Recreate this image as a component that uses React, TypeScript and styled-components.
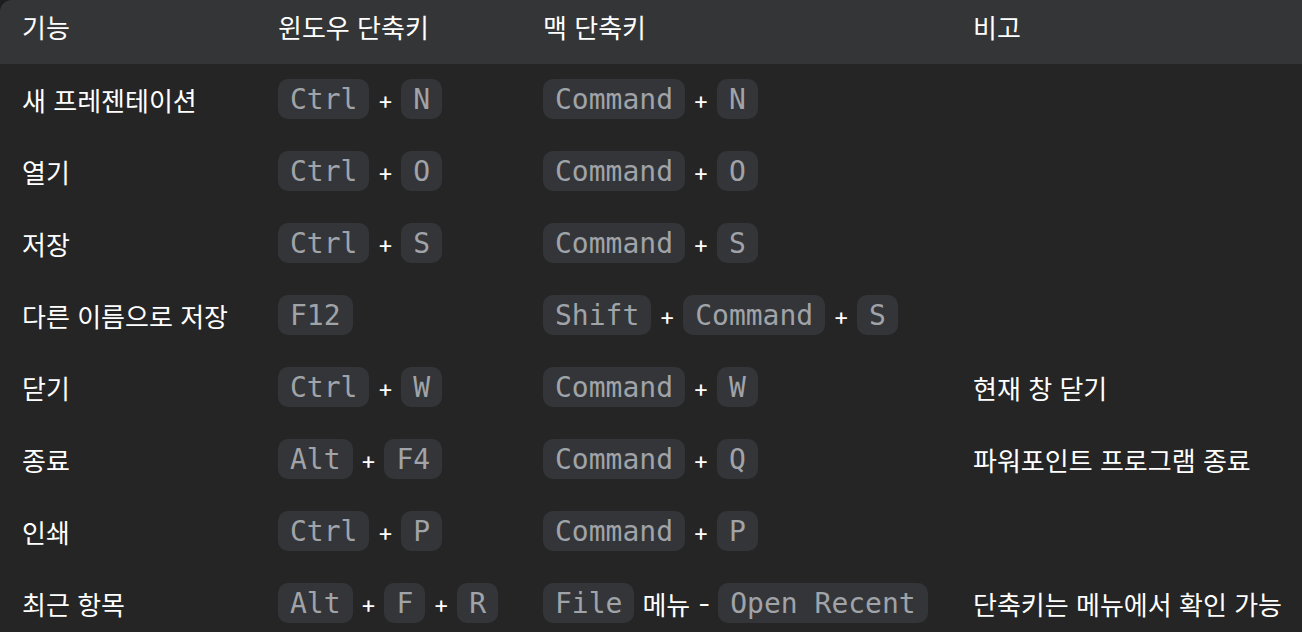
import React from "react";
import styled, { createGlobalStyle } from "styled-components";

const GlobalStyle = createGlobalStyle`
  html, body {
    margin: 0;
    padding: 0;
    background: #1e1e1f;
    overflow: hidden;
  }
  body {
    font-family: Inter, "Noto Sans CJK KR", sans-serif;
    color: #ffffff;
  }
`;

const Wrapper = styled.div`
  width: 1302px;
  height: 632px;
  overflow: hidden;
  background: #252525;
  border-top-left-radius: 12px;
`;

const Table = styled.table`
  width: 1302px;
  border-collapse: collapse;
  table-layout: fixed;
`;

const HeadCell = styled.th<{ $w: number }>`
  width: ${({ $w }) => $w}px;
  height: 64px;
  padding: 0 0 12px 22px;
  box-sizing: border-box;
  background: #343537;
  text-align: left;
  font-weight: 400;
  font-size: 26px;
  color: #ffffff;
  vertical-align: middle;
`;

const Cell = styled.td`
  height: 72px;
  padding: 0 0 2px 22px;
  box-sizing: border-box;
  font-size: 26px;
  color: #ffffff;
  vertical-align: middle;
  white-space: nowrap;
`;

const Combo = styled.div`
  display: flex;
  align-items: center;
  gap: 8px;
`;

const Key = styled.kbd`
  display: inline-block;
  box-sizing: border-box;
  height: 40px;
  line-height: 40px;
  padding: 1px 12px 0;
  border-radius: 10px;
  background: #333538;
  color: #a0a3a8;
  font-family: "DejaVu Sans Mono", "Liberation Mono", monospace;
  font-size: 28px;
  overflow: hidden;
`;

const Plus = styled.span`
  color: #ffffff;
  font-size: 24px;
  line-height: 1;
  padding-top: 4px;
`;

const Word = styled.span`
  color: #ffffff;
  font-size: 26px;
`;

type Part = string | { t: string };

const Shortcut = ({ keys }: { keys: Part[] }) => (
  <Combo>
    {keys.map((k, i) =>
      typeof k === "string" ? (
        <React.Fragment key={i}>
          {i > 0 && typeof keys[i - 1] === "string" && <Plus>+</Plus>}
          <Key>{k}</Key>
        </React.Fragment>
      ) : (
        <Word key={i}>{k.t}</Word>
      )
    )}
  </Combo>
);

const rows: { name: string; win: Part[]; mac: Part[]; note?: string }[] = [
  { name: "새 프레젠테이션", win: ["Ctrl", "N"], mac: ["Command", "N"] },
  { name: "열기", win: ["Ctrl", "O"], mac: ["Command", "O"] },
  { name: "저장", win: ["Ctrl", "S"], mac: ["Command", "S"] },
  { name: "다른 이름으로 저장", win: ["F12"], mac: ["Shift", "Command", "S"] },
  { name: "닫기", win: ["Ctrl", "W"], mac: ["Command", "W"], note: "현재 창 닫기" },
  { name: "종료", win: ["Alt", "F4"], mac: ["Command", "Q"], note: "파워포인트 프로그램 종료" },
  { name: "인쇄", win: ["Ctrl", "P"], mac: ["Command", "P"] },
  {
    name: "최근 항목",
    win: ["Alt", "F", "R"],
    mac: ["File", { t: "메뉴" }, { t: "-" }, "Open Recent"],
    note: "단축키는 메뉴에서 확인 가능",
  },
];

export default function App() {
  return (
    <>
      <GlobalStyle />
      <Wrapper>
        <Table>
          <thead>
            <tr>
              <HeadCell $w={256}>기능</HeadCell>
              <HeadCell $w={265}>윈도우 단축키</HeadCell>
              <HeadCell $w={430}>맥 단축키</HeadCell>
              <HeadCell $w={351}>비고</HeadCell>
            </tr>
          </thead>
          <tbody>
            {rows.map((r) => (
              <tr key={r.name}>
                <Cell>{r.name}</Cell>
                <Cell>
                  <Shortcut keys={r.win} />
                </Cell>
                <Cell>
                  <Shortcut keys={r.mac} />
                </Cell>
                <Cell>{r.note}</Cell>
              </tr>
            ))}
          </tbody>
        </Table>
      </Wrapper>
    </>
  );
}
